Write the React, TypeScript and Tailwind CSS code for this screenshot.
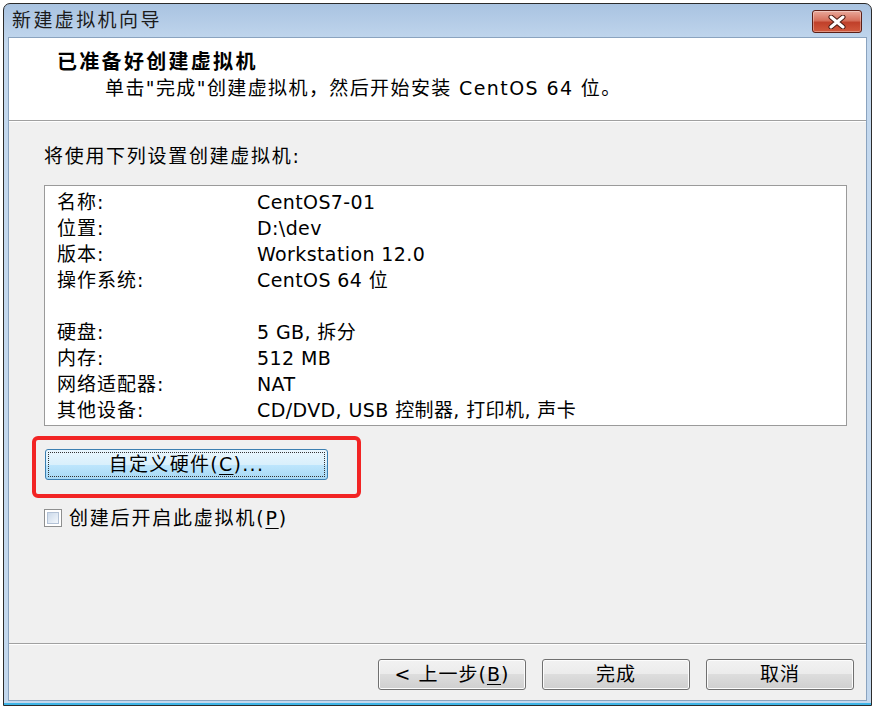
import React from "react";

const font = { fontFamily: '"DejaVu Sans", "Noto Sans CJK SC", sans-serif' };

function WinButton({ children, w = "w-[148px]" }: { children: React.ReactNode; w?: string }) {
  return (
    <div
      className={`${w} h-[31px] rounded-[3px] border border-[#707070] flex items-center justify-center text-[19px] tracking-[1px] text-black bg-[linear-gradient(to_bottom,#f2f2f2_0%,#ebebeb_50%,#dddddd_50%,#cfcfcf_100%)] shadow-[inset_0_0_0_1px_#fcfcfc]`}
    >
      {children}
    </div>
  );
}

export default function App() {
  const rows1 = [
    ["名称:", "CentOS7-01"],
    ["位置:", "D:\\dev"],
    ["版本:", "Workstation 12.0"],
    ["操作系统:", "CentOS 64 位"],
  ];
  const rows2 = [
    ["硬盘:", "5 GB, 拆分"],
    ["内存:", "512 MB"],
    ["网络适配器:", "NAT"],
    ["其他设备:", "CD/DVD, USB 控制器, 打印机, 声卡"],
  ];
  return (
    <div className="w-[879px] h-[712px] bg-white pt-[3px] pl-[3px]" style={font}>
      <div className="w-[869px] h-[703px] border border-[#2b2b2b] rounded-t-[7px] flex flex-col bg-[linear-gradient(to_bottom,#a9c3e1,#c3d8ee_40px,#c3d8ee)] overflow-hidden">
        {/* title bar */}
        <div className="h-[33px] flex items-center justify-between pl-[8px] pr-[9px] shrink-0">
          <span className="text-[19px] tracking-[2.4px] text-[#1b1b1b] leading-none">新建虚拟机向导</span>
          <div className="w-[50px] h-[23px] mt-[2px] rounded-[3px] border border-[#5b1f17] flex items-center justify-center bg-[linear-gradient(to_bottom,#e9a99b_0%,#d6705c_45%,#c0402a_55%,#d25a3e_100%)] shadow-[inset_0_0_0_1px_rgba(255,255,255,0.35)]">
            <svg width="20" height="14" viewBox="0 0 20 14">
              <path d="M4 2 L16 12 M16 2 L4 12" stroke="#4a1a12" strokeWidth="5" strokeLinecap="round" />
              <path d="M4 2 L16 12 M16 2 L4 12" stroke="#ffffff" strokeWidth="3" strokeLinecap="round" />
            </svg>
          </div>
        </div>
        {/* inner frame */}
        <div className="flex-1 mx-[4px] mb-[2px] border border-[#8aa3bf] flex flex-col bg-[#f0f0f0]">
          {/* header */}
          <div className="h-[83px] bg-white border-b border-[#a0a0a0] shrink-0 pt-[11px] pl-[48px]">
            <div className="text-[20px] tracking-[2.3px] font-bold text-black leading-[26px]">已准备好创建虚拟机</div>
            <div className="text-[19px] tracking-[1.4px] text-black leading-[26px] pl-[48px]">单击"完成"创建虚拟机，然后开始安装 CentOS 64 位。</div>
          </div>
          <div className="h-px bg-white shrink-0" />
          {/* body */}
          <div className="flex-1 pt-[21px] pl-[35px] pr-[16px] flex flex-col">
            <div className="text-[19px] tracking-[1.7px] text-black leading-[26px]">将使用下列设置创建虚拟机:</div>
            <div className="mt-[16px] w-[803px] h-[241px] border border-[#9a9a9a] bg-white pt-[3px] pl-[12px] text-[19px] text-black">
              {rows1.map(([k, v]) => (
                <div key={k} className="flex h-[26px] items-center">
                  <div className="w-[200px] tracking-[1px]">{k}</div>
                  <div className="tracking-[0.4px]">{v}</div>
                </div>
              ))}
              <div className="h-[26px]" />
              {rows2.map(([k, v]) => (
                <div key={k} className="flex h-[26px] items-center">
                  <div className="w-[200px] tracking-[1px]">{k}</div>
                  <div className="tracking-[0.4px]">{v}</div>
                </div>
              ))}
            </div>
            <div className="mt-[10px] ml-[-12px] w-[329px] h-[62px] border-4 border-[#f22424] rounded-[6px] pt-[9px] pl-[9px]">
              <div className="w-[283px] h-[31px] rounded-[3px] border border-[#3c7fb1] p-[2px] bg-[linear-gradient(to_bottom,#eaf6fd_0%,#d9f0fc_50%,#bee6fd_50%,#a7d9f5_100%)]">
                <div className="w-full h-full border border-dotted border-[#333] flex items-center justify-center text-[19px] tracking-[1.3px] text-black">
                  自定义硬件(<span className="underline underline-offset-[3px]">C</span>)...
                </div>
              </div>
            </div>
            <div className="mt-[9px] flex items-center">
              <div className="w-[18px] h-[18px] border border-[#8e8f8f] p-[2px] bg-white">
                <div className="w-full h-full border border-[#b3c2d6] bg-[linear-gradient(135deg,#cbd9ea,#f3f7fc)]" />
              </div>
              <span className="ml-[7px] text-[19px] tracking-[1.8px] text-black leading-[22px]">
                创建后开启此虚拟机(<span className="underline underline-offset-[3px]">P</span>)
              </span>
            </div>
          </div>
          {/* footer */}
          <div className="h-px bg-[#a0a0a0] shrink-0" />
          <div className="h-px bg-white shrink-0" />
          <div className="h-[55px] shrink-0 flex justify-end items-start pt-[14px] pr-[12px] gap-[16px]">
            <WinButton>
              &lt; 上一步(<span className="underline underline-offset-[3px]">B</span>)
            </WinButton>
            <WinButton>完成</WinButton>
            <WinButton>取消</WinButton>
          </div>
        </div>
        <div className="h-[2px] bg-[#3eb4e6] shrink-0" />
      </div>
    </div>
  );
}
